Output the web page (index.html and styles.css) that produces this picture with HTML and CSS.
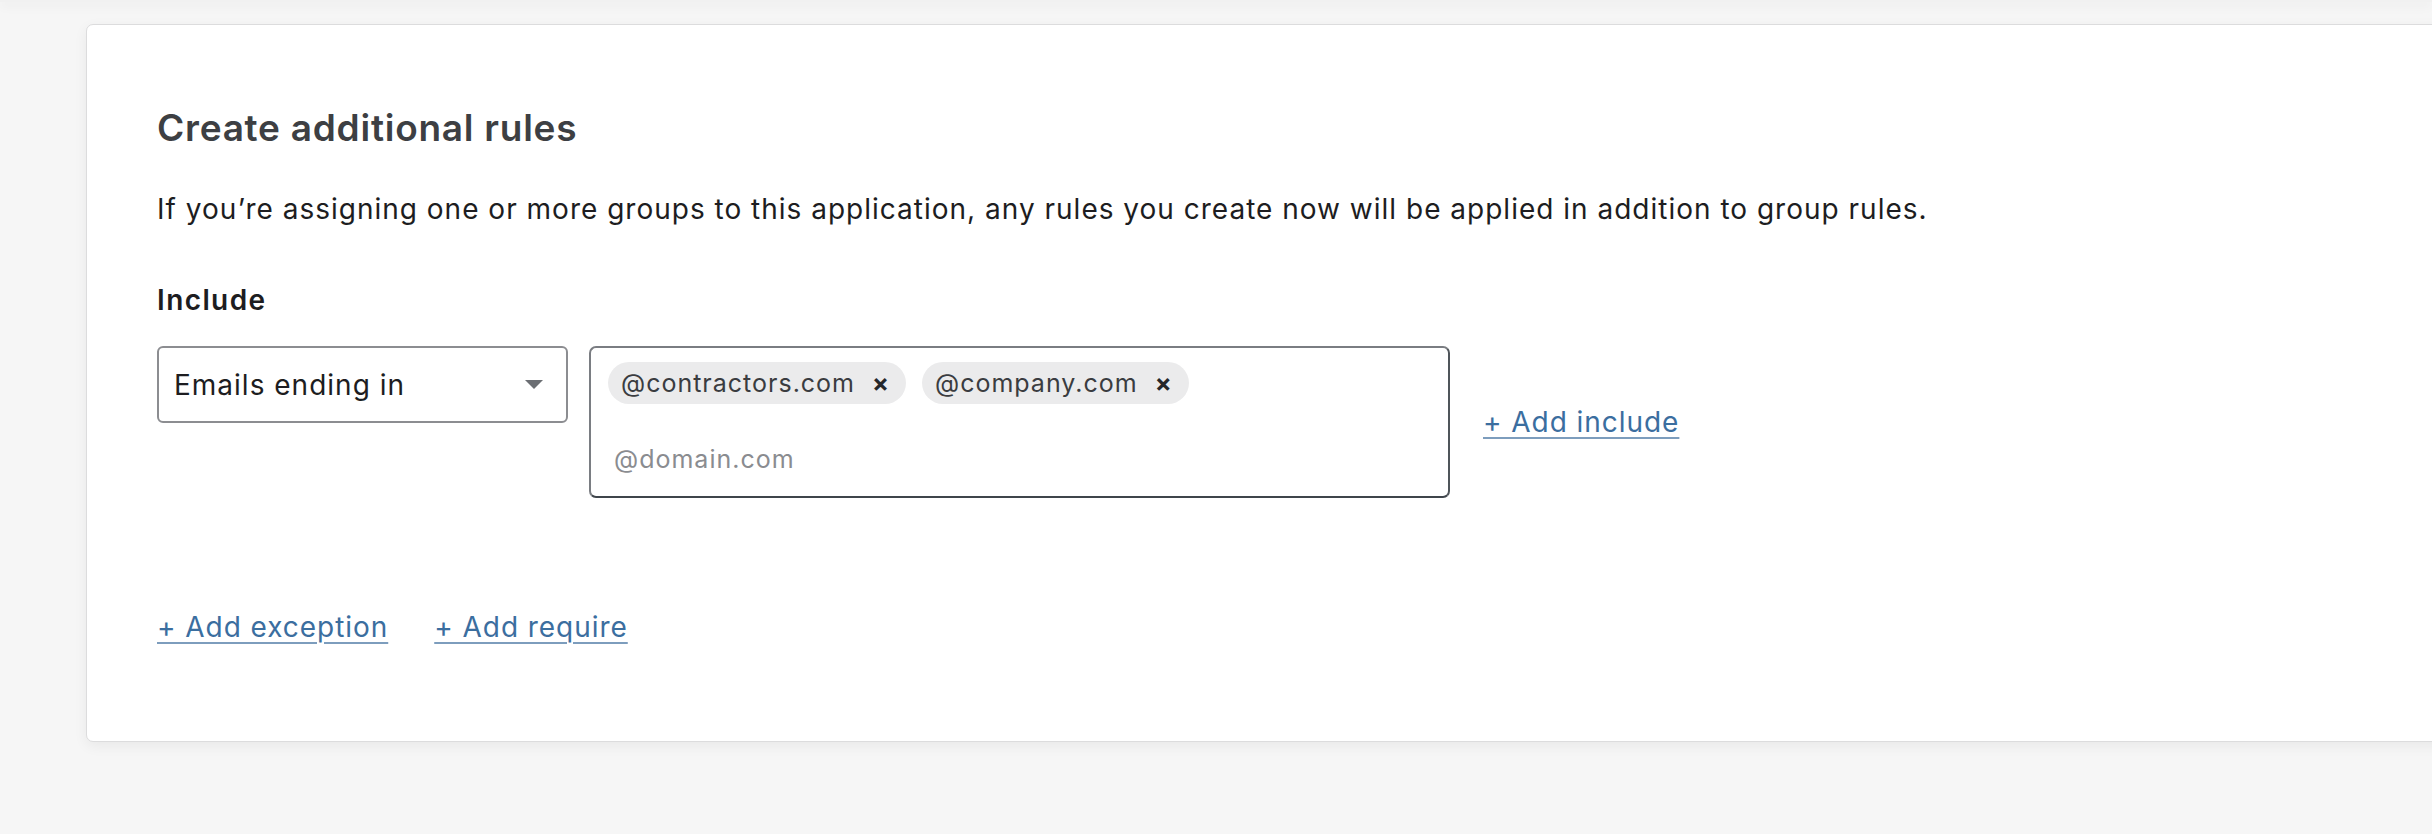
FILE: index.html
```html
<!DOCTYPE html>
<html lang="en">
<head>
<meta charset="utf-8">
<title>Create additional rules</title>
<link rel="stylesheet" href="styles.css">
</head>
<body>
<div class="prev-card"></div>
<main class="page">
  <section class="card">
    <h2 class="title">Create additional rules</h2>
    <p class="desc">If you’re assigning one or more groups to this application, any rules you create now will be applied in addition to group rules.</p>
    <div class="label">Include</div>
    <div class="rule-row">
      <div class="select">
        <span class="select-text">Emails ending in</span>
        <svg class="caret" width="20" height="11" viewBox="0 0 20 11"><path d="M1 1 L19 1 L10 10 Z" fill="#6b6e73"/></svg>
      </div>
      <div class="tag-input">
        <div class="tags">
          <span class="tag">@contractors.com<span class="tag-x">×</span></span>
          <span class="tag">@company.com<span class="tag-x">×</span></span>
        </div>
        <div class="placeholder">@domain.com</div>
      </div>
      <a class="link add-include" href="#">+ Add include</a>
    </div>
    <div class="actions">
      <a class="link" href="#">+ Add exception</a>
      <a class="link" href="#">+ Add require</a>
    </div>
  </section>
</main>
</body>
</html>
```

FILE: styles.css
```css
html, body {
  margin: 0;
  padding: 0;
  background: #f6f6f6;
  overflow: hidden;
  height: 834px;
}
body {
  font-family: Inter, "Noto Sans", "Liberation Sans", sans-serif;
  color: #1d1d21;
}
.prev-card {
  height: 4px;
  margin-top: -2px;
  background: #f1f1f1;
  box-shadow: 0 3px 12px rgba(0, 0, 0, 0.07);
}
.page {
  padding-top: 22px;
  padding-left: 86px;
}
.card {
  width: 2400px;
  height: 718px;
  box-sizing: border-box;
  background: #ffffff;
  border: 1px solid #dcdcdd;
  border-radius: 7px;
  box-shadow: 0 4px 14px rgba(0, 0, 0, 0.06);
  padding: 82px 0 0 70px;
}
.title {
  margin: 0;
  font-size: 37px;
  font-weight: 600;
  line-height: 42px;
  color: #3d3f43;
  letter-spacing: 0.75px;
}
.desc {
  margin: 42px 0 0;
  font-size: 28px;
  line-height: 36px;
  letter-spacing: 1px;
  color: #1d1d21;
}
.label {
  margin-top: 55px;
  font-size: 28px;
  font-weight: 600;
  line-height: 36px;
  letter-spacing: 1.4px;
  color: #1d1d21;
}
.rule-row {
  margin-top: 28px;
  display: flex;
  align-items: center;
  gap: 21px;
}
.select {
  align-self: flex-start;
  width: 411px;
  height: 77px;
  box-sizing: border-box;
  border: 2px solid #8c8d91;
  border-radius: 6px;
  display: flex;
  align-items: center;
  justify-content: space-between;
  padding: 0 22px 0 15px;
  font-size: 28px;
  letter-spacing: 1px;
  color: #1d1d21;
}
.caret {
  display: block;
}
.tag-input {
  width: 861px;
  height: 152px;
  box-sizing: border-box;
  border: 2px solid #7a7d82;
  border-bottom-color: #3f454b;
  border-right-color: #4f555a;
  border-radius: 7px;
  padding: 14px 17px 0;
  display: flex;
  flex-direction: column;
}
.tags {
  display: flex;
  gap: 16px;
}
.tag {
  height: 42px;
  box-sizing: border-box;
  border-radius: 21px;
  background: #ebebec;
  display: inline-flex;
  align-items: center;
  padding: 0 17px 0 13px;
  font-size: 25px;
  letter-spacing: 1px;
  color: #3a3c40;
}
.tag-x {
  margin-left: 17px;
  font-size: 25px;
  font-weight: 700;
  letter-spacing: 0;
  color: #25272b;
  line-height: 1;
}
.placeholder {
  margin-top: 37px;
  padding-left: 6px;
  font-size: 25px;
  letter-spacing: 1px;
  line-height: 36px;
  color: #8a8c90;
}
.link {
  font-size: 28px;
  line-height: 36px;
  letter-spacing: 0.95px;
  color: #3b6e9f;
  text-decoration: underline;
  text-decoration-color: #7d9dbd;
  text-underline-offset: 5px;
  text-decoration-thickness: 2px;
}
.add-include {
  margin-left: 12px;
}
.actions {
  margin-top: 111px;
  display: flex;
  gap: 46px;
}
```
